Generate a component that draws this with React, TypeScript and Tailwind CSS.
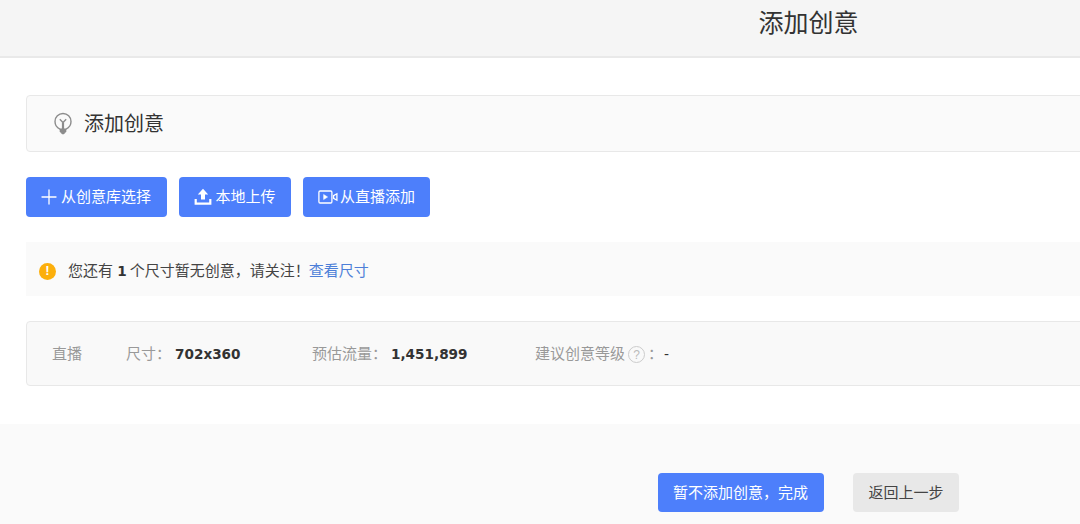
import { Plus } from "lucide-react";

const cjk = "font-['Liberation_Sans','Noto_Sans_CJK_SC',sans-serif]";
const blueBtn =
  "flex h-10 items-center rounded-[4px] bg-[#4d7ffb] text-[15px] text-white";
const boldNum = "font-['DejaVu_Sans','Noto_Sans_CJK_SC',sans-serif] text-[13.6px] text-[#333]";

function BulbIcon() {
  return (
    <svg width="18" height="23" viewBox="0 0 18 23" fill="none" stroke="#8c8c8c" strokeWidth="1.4">
      <path d="M6 17.200C3 15.800 1 13 1 9.500a8 8 0 0 1 16 0c0 3.500-2 6.300-5 7.700z" />
      <path d="M5.800 7.200 9 10.400l3.200-3.200" strokeWidth="1.400" />
      <path d="M9 10.400v8" strokeWidth="2.200" />
      <path d="M6 17.400h6v2.200L9.800 22H8.200L6 19.600z" fill="#8c8c8c" strokeWidth="0.600" />
    </svg>
  );
}

function UploadIcon() {
  return (
    <svg width="18" height="18" viewBox="0 0 18 18" fill="white">
      <path d="M9 .8 14.200 6.400H11v5.200H7V6.400H3.800z" />
      <path d="M.6 11h2.200v3.600h12.400V11h2.200v5.800H.6z" />
    </svg>
  );
}

function LiveIcon() {
  return (
    <svg width="20" height="14" viewBox="0 0 20 14" fill="none" stroke="white" strokeWidth="1.300">
      <rect x="0.900" y="1" width="13" height="12" rx="1.200" />
      <path d="M5.600 4.400 9.600 7 5.600 9.600z" fill="white" strokeWidth="0.500" />
      <path d="M15.600 5.600 18.900 3.800v6.400L15.600 8.400z" />
    </svg>
  );
}

export default function App() {
  return (
    <div className="h-[524px] w-[1080px] overflow-hidden bg-white">
      <div className={`w-[1616px] ${cjk}`}>
        {/* Header */}
        <header className="flex h-[58px] items-start justify-center border-b-2 border-[#e9e9e9] bg-[#f5f5f5] pt-[5px] pl-[1px]">
          <h1 className="text-[25px] leading-9 font-normal text-[#333]">添加创意</h1>
        </header>

        <main className="h-[366px] px-[26px] pt-[37px]">
          {/* Section title */}
          <div className="flex h-[57px] items-center gap-[12px] rounded-[4px] border border-[#e8e8e8] bg-[#fafafa] pl-[27px]">
            <BulbIcon />
            <span className="text-[20px] text-[#333]">添加创意</span>
          </div>

          {/* Actions */}
          <div className="mt-[25px] flex gap-[12px]">
            <button className={`${blueBtn} w-[141px] pl-[11px]`}>
              <Plus size={24} strokeWidth={1.300} />
              从创意库选择
            </button>
            <button className={`${blueBtn} w-[112px] justify-center gap-[3px]`}>
              <UploadIcon />
              本地上传
            </button>
            <button className={`${blueBtn} w-[127px] justify-center gap-[2px]`}>
              <LiveIcon />
              从直播添加
            </button>
          </div>

          {/* Notice */}
          <div className="mt-[25px] flex h-[54px] items-center bg-[#fafafa] pt-[4px] pl-[13px] text-[15px] text-[#444]">
            <span className="mr-[12px] flex h-[17px] w-[17px] items-center justify-center rounded-full bg-[#fcaf0c] text-[13px] font-bold text-white">
              !
            </span>
            <span>
              您还有 <b className={`${boldNum} mr-[-1px]`}>1</b> 个尺寸暂无创意，请关注！
            </span>
            <a className="ml-[-1px] text-[#4d7fd8]">查看尺寸</a>
          </div>

          {/* Size info */}
          <div className="mt-[25px] flex h-[65px] items-center rounded-[4px] border border-[#e8e8e8] bg-[#f9f9f9] pt-[2px] pl-[25px] text-[15px] text-[#999]">
            <span className="w-[74px]">直播</span>
            <span className="w-[49px]">尺寸：</span>
            <b className={`w-[137px] ${boldNum}`}>702x360</b>
            <span className="w-[79px]">预估流量：</span>
            <b className={`w-[144px] ${boldNum}`}>1,451,899</b>
            <span>建议创意等级</span>
            <span className="mx-[3px] flex h-[17px] w-[17px] items-center justify-center rounded-full border border-[#ccc] text-[12px] leading-none text-[#bbb]">
              ?
            </span>
            <span className="w-[16px]">：</span>
            <span className="text-[#333]">-</span>
          </div>
        </main>

        {/* Footer */}
        <footer className="flex h-[100px] justify-center gap-[29px] bg-[#fafafa] pt-[49px] text-[15px]">
          <button className="h-[39px] w-[166px] rounded-[4px] bg-[#4d7ffb] pt-[1px] text-white">暂不添加创意，完成</button>
          <button className="h-[39px] w-[106px] rounded-[4px] bg-[#e8e8e8] pt-[1px] pl-[1px] text-[#444]">返回上一步</button>
        </footer>
      </div>
    </div>
  );
}
